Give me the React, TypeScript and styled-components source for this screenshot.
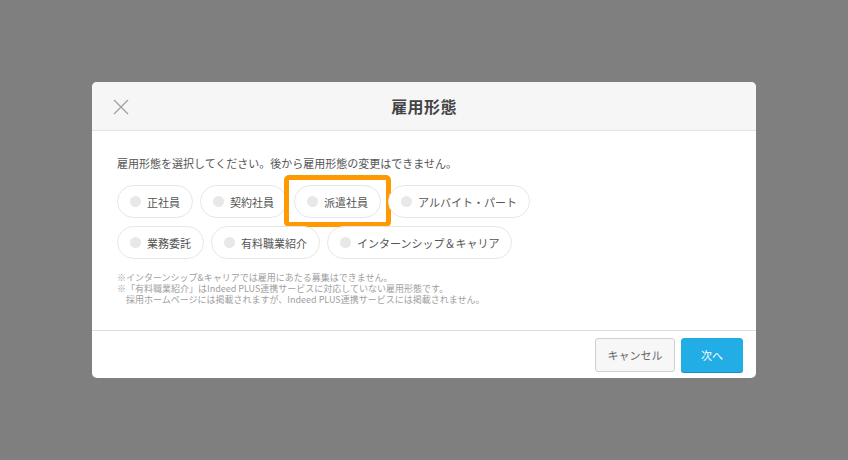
import React from "react";
import styled, { createGlobalStyle } from "styled-components";

const Global = createGlobalStyle`
  html, body { margin: 0; padding: 0; }
  body {
    background: #7f7f7f;
    font-family: "Noto Sans CJK JP", "Noto Sans", "Liberation Sans", sans-serif;
    color: #333;
  }
`;

const Page = styled.div`
  width: 848px;
  height: 460px;
  display: flex;
  justify-content: center;
  padding-top: 82px;
  box-sizing: border-box;
`;

const Modal = styled.div`
  width: 664px;
  height: 296px;
  background: #fff;
  border-radius: 5px;
  overflow: hidden;
  display: flex;
  flex-direction: column;
`;

const Header = styled.div`
  height: 48px;
  background: #f6f6f6;
  border-bottom: 1px solid #e3e3e3;
  display: grid;
  grid-template-columns: 60px 1fr 60px;
  align-items: center;
`;

const CloseButton = styled.div`
  display: flex;
  align-items: center;
  justify-content: flex-start;
  padding-left: 21px;
  padding-top: 1px;
`;

const Title = styled.h1`
  margin: 0;
  text-align: center;
  font-size: 16px;
  font-weight: 700;
  color: #444;
  letter-spacing: 0.4px;
`;

const Body = styled.div`
  flex: 1;
  padding: 24px 25px 0;
  border-bottom: 1px solid #dcdcdc;
`;

const Intro = styled.p`
  margin: 0 0 14px;
  font-size: 11px;
  line-height: 16px;
  color: #555;
`;

const Options = styled.div`
  display: flex;
  flex-wrap: wrap;
  gap: 8px 7px;
  width: 420px;
`;

const PillWrap = styled.div`
  position: relative;
`;

const Pill = styled.label`
  height: 33px;
  box-sizing: border-box;
  border: 1px solid #e6e6e6;
  border-radius: 17px;
  display: flex;
  align-items: center;
  padding: 0 12px 0 12px;
  gap: 6px;
  font-size: 11px;
  color: #555;
  background: #fff;
  white-space: nowrap;
`;

const Dot = styled.span`
  width: 11px;
  height: 11px;
  border-radius: 50%;
  background: #e8e8e8;
  flex: none;
`;

const Highlight = styled.span`
  position: absolute;
  left: -10px;
  right: -10px;
  top: -10px;
  bottom: -9px;
  border: 5px solid #ff9900;
  border-radius: 5px;
  pointer-events: none;
`;

const Notes = styled.div`
  margin-top: 13px;
  font-size: 9px;
  line-height: 11px;
  color: #a0a0a0;
`;

const NoteLine = styled.div<{ $indent?: boolean }>`
  height: 11px;
  padding-left: ${(p) => (p.$indent ? "9px" : "0")};
`;

const Footer = styled.div`
  height: 47px;
  display: flex;
  justify-content: flex-end;
  align-items: center;
  gap: 6px;
  padding-right: 13px;
`;

const Button = styled.button<{ $primary?: boolean }>`
  height: 34px;
  box-sizing: border-box;
  border-radius: 3px;
  font-family: inherit;
  font-size: 11px;
  padding: 0;
  width: ${(p) => (p.$primary ? "62px" : "80px")};
  background: ${(p) => (p.$primary ? "#22ade6" : "#f7f7f7")};
  color: ${(p) => (p.$primary ? "#fff" : "#666")};
  border: 1px solid ${(p) => (p.$primary ? "#22ade6" : "#cfcfcf")};
  box-shadow: ${(p) => (p.$primary ? "0 1px 0 #1a8fc0" : "none")};
  margin-top: 1px;
`;

const options = [
  "正社員",
  "契約社員",
  "派遣社員",
  "アルバイト・パート",
  "業務委託",
  "有料職業紹介",
  "インターンシップ＆キャリア",
];

export default function App() {
  return (
    <>
      <Global />
      <Page>
        <Modal>
          <Header>
            <CloseButton>
              <svg width="16" height="16" viewBox="0 0 16 16">
                <path d="M1 1 L15 15 M15 1 L1 15" stroke="#a3a3a3" strokeWidth="1.4" fill="none" />
              </svg>
            </CloseButton>
            <Title>雇用形態</Title>
            <div />
          </Header>
          <Body>
            <Intro>雇用形態を選択してください。後から雇用形態の変更はできません。</Intro>
            <Options>
              {options.map((o) => (
                <PillWrap key={o}>
                  <Pill>
                    <Dot />
                    {o}
                  </Pill>
                  {o === "派遣社員" && <Highlight />}
                </PillWrap>
              ))}
            </Options>
            <Notes>
              <NoteLine>※インターンシップ&amp;キャリアでは雇用にあたる募集はできません。</NoteLine>
              <NoteLine>※「有料職業紹介」はIndeed PLUS連携サービスに対応していない雇用形態です。</NoteLine>
              <NoteLine $indent>採用ホームページには掲載されますが、Indeed PLUS連携サービスには掲載されません。</NoteLine>
            </Notes>
          </Body>
          <Footer>
            <Button>キャンセル</Button>
            <Button $primary>次へ</Button>
          </Footer>
        </Modal>
      </Page>
    </>
  );
}
